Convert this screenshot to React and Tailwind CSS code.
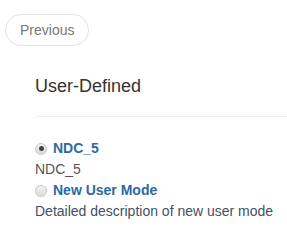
function Radio({ checked }) {
  return (
    <span className="relative inline-flex items-center justify-center w-[12px] h-[12px] rounded-full border border-[#c6c6c6] bg-gradient-to-b from-[#f4f4f4] to-[#d9d9d9] shrink-0">
      {checked && <span className="w-[5px] h-[5px] rounded-full bg-[#444]" />}
    </span>
  );
}

export default function App() {
  return (
    <div className="w-[287px] h-[239px] bg-white overflow-hidden" style={{ fontFamily: '"Liberation Sans", Arial, sans-serif' }}>
      <div className="pt-[14px] pl-[5px]">
        <button className="h-[32px] px-[14px] rounded-full border border-[#e3e3e3] bg-white text-[14px] text-[#777] leading-none">
          Previous
        </button>
      </div>
      <div className="pl-[35px]">
        <h3 className="mt-[30px] text-[18px] leading-[20px] text-[#333]">User-Defined</h3>
        <div className="mt-[20px] border-t border-[#eee]" />
        <div className="mt-[21px] text-[14px] leading-[21px]">
          <div className="flex items-center gap-[6px]">
            <Radio checked />
            <span className="font-bold text-[#2b6aa6]">NDC_5</span>
          </div>
          <div className="text-[#555]">NDC_5</div>
          <div className="flex items-center gap-[6px]">
            <Radio />
            <span className="font-bold text-[#2b6aa6]">New User Mode</span>
          </div>
          <div className="text-[#3f5166]">Detailed description of new user mode</div>
        </div>
      </div>
    </div>
  );
}
